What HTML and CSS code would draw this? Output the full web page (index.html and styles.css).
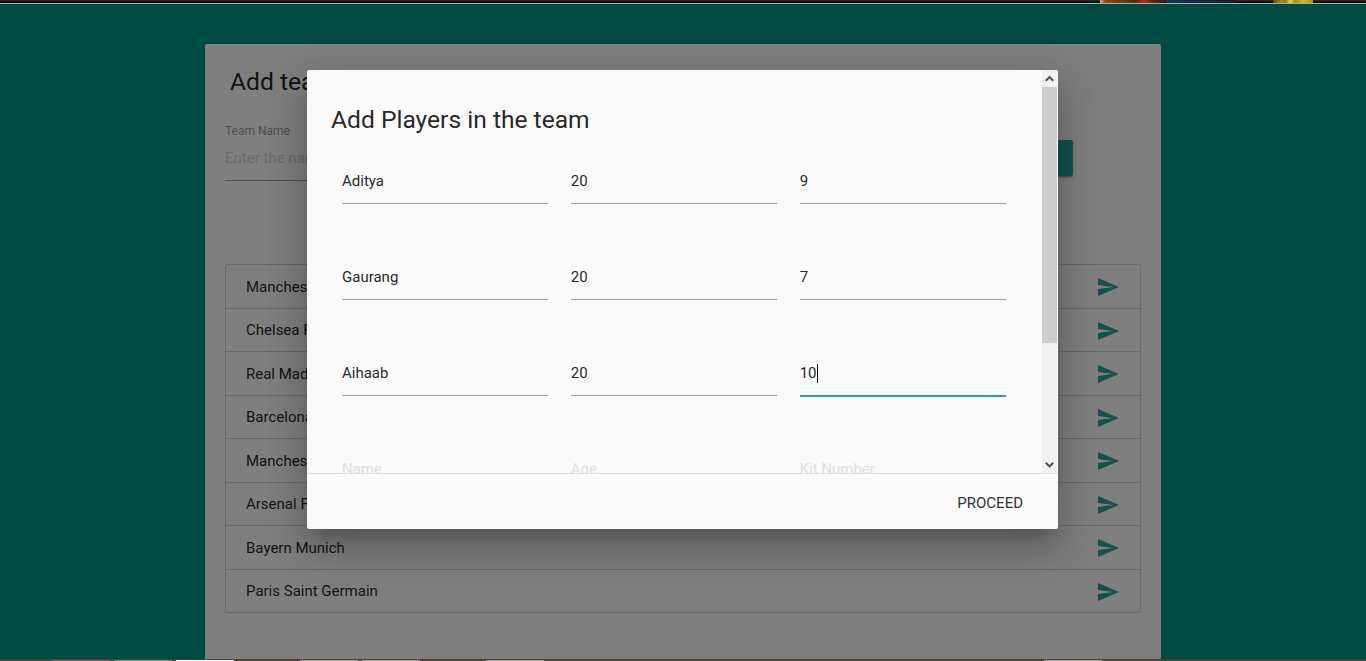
FILE: index.html
```html
<!DOCTYPE html>
<html lang="en">
<head>
<meta charset="utf-8">
<title>Add team</title>
<link rel="stylesheet" href="styles.css">
</head>
<body>
<svg class="defs"><symbol id="send" viewBox="0 0 24 24"><path d="M2.01 21L23 12 2.01 3 2 10l15 2-15 2z"/></symbol></svg>
<div class="page">
  <main class="card">
    <h5 class="card-title">Add team</h5>
    <div class="form-row">
      <div class="team-field">
        <div class="label">Team Name</div>
        <div class="team-input">Enter the name</div>
      </div>
      <div class="add-btn"></div>
    </div>
    <ul class="collection">
      <li>Manchester United<svg><use href="#send"/></svg></li>
      <li>Chelsea FC<svg><use href="#send"/></svg></li>
      <li>Real Madrid<svg><use href="#send"/></svg></li>
      <li>Barcelona<svg><use href="#send"/></svg></li>
      <li>Manchester City<svg><use href="#send"/></svg></li>
      <li>Arsenal FC<svg><use href="#send"/></svg></li>
      <li>Bayern Munich<svg><use href="#send"/></svg></li>
      <li>Paris Saint Germain<svg><use href="#send"/></svg></li>
    </ul>
  </main>
</div>
<div class="overlay">
  <section class="modal">
    <div class="modal-body">
      <div class="modal-content">
        <h5 class="modal-title">Add Players in the team</h5>
        <div class="players">
          <div class="field">Aditya</div><div class="field">20</div><div class="field">9</div>
          <div class="field">Gaurang</div><div class="field">20</div><div class="field">7</div>
          <div class="field">Aihaab</div><div class="field">20</div><div class="field focused">10<span class="caret"></span></div>
          <div class="field empty">Name</div><div class="field empty">Age</div><div class="field empty">Kit Number</div>
        </div>
      </div>
      <div class="scrollbar">
        <svg class="arrow" viewBox="0 0 15 17"><path d="M3.8 10.8 7.5 7.1l3.7 3.7"/></svg>
        <div class="thumb"></div>
        <svg class="arrow down" viewBox="0 0 15 17"><path d="M3.8 6.7l3.7 3.7 3.7-3.7"/></svg>
      </div>
    </div>
    <footer class="modal-footer"><span class="proceed">PROCEED</span></footer>
  </section>
</div>
<div class="strip-top"></div>
<div class="strip-bottom"></div>
</body>
</html>
```
FILE: styles.css
```css
* { box-sizing: border-box; }
body { margin: 0; height: 661px; overflow: hidden; background: #009688; font: 15px/22.5px Roboto, sans-serif; color: rgba(0,0,0,.87); }
.defs { display: none; }
h5 { margin: 0; font-size: 24.6px; line-height: 27px; font-weight: 400; }
.page { height: 661px; padding-top: 44px; overflow: hidden; }
.card { width: 956px; height: 640px; margin-left: 205px; padding: 24px 20px 0; background: #fff; border-radius: 2px; box-shadow: 0 2px 2px rgba(0,0,0,.14), 0 1px 5px rgba(0,0,0,.12), 0 3px 1px -2px rgba(0,0,0,.2); }
.card-title { padding-left: 5px; }
.form-row { display: flex; height: 85px; margin-top: 25px; gap: 20px; }
.team-field { width: 700px; }
.label { font-size: 12px; line-height: 22px; color: #9e9e9e; }
.team-input { height: 39px; line-height: 33px; border-bottom: 1px solid #9e9e9e; color: #d8d8d8; }
.add-btn { width: 128px; height: 36px; margin-top: 20px; border-radius: 2px; background: #26a69a; box-shadow: 0 2px 2px rgba(0,0,0,.14), 0 1px 5px rgba(0,0,0,.12), 0 3px 1px -2px rgba(0,0,0,.2); }
.collection { margin: 59px 0 0; padding: 0; list-style: none; border: 1px solid #d6d6d6; border-radius: 2px; }
.collection li { display: flex; justify-content: space-between; height: 43.5px; padding: 10.5px 20px 9px; border-bottom: 1px solid #d6d6d6; }
.collection li:last-child { height: 42.5px; border-bottom: 0; }
.collection svg { width: 24px; height: 24px; margin-top: -.5px; fill: #26a69a; }
.overlay { position: absolute; top: 0; left: 0; width: 100%; height: 661px; padding: 70px 0 0 307px; background: rgba(0,0,0,.5); overflow: hidden; }
.modal { width: 751px; height: 459px; background: #fafafa; border-radius: 2px; overflow: hidden; box-shadow: 0 24px 38px 3px rgba(0,0,0,.14), 0 9px 46px 8px rgba(0,0,0,.12), 0 11px 15px -7px rgba(0,0,0,.2); }
.modal-body { display: flex; height: 403px; }
.modal-content { width: 735px; padding: 36px 24px 0; overflow: hidden; }
.players { display: grid; grid-template-columns: repeat(3, 1fr); column-gap: 22.5px; row-gap: 50px; padding: 0 12px 0 11px; margin-top: 25px; }
.field { display: flex; align-items: center; height: 46px; padding-top: 2px; border-bottom: 1px solid #9e9e9e; }
.field.focused { border-color: #26a69a; box-shadow: 0 1px #26a69a; }
.field.empty { color: #e0e0e0; }
.caret { width: 1px; height: 19px; background: #000; }
.scrollbar { display: flex; flex-direction: column; width: 15px; background: #f0f0f0; }
.thumb { height: 256px; background: #cdcdcd; }
.arrow { width: 15px; height: 17px; fill: none; stroke: #505050; stroke-width: 2; }
.down { margin-top: auto; }
.modal-footer { display: flex; justify-content: flex-end; height: 56px; padding: 10px 35px 0 0; border-top: 1px solid #dedede; }
.proceed { line-height: 38px; color: #343434; }
.strip-top { position: absolute; top: 0; left: 0; width: 100%; height: 4px; background:
  linear-gradient(#b0b8b5, #a0a8a5) 0 3px / 100% 1px no-repeat,
  linear-gradient(90deg, #4d480b, #a98b13 20%, #8f7a12 32%, #e8dc2a 42%, #a98b13 55%, #d5bd1b 75%, #b08f14) 1273px 0 / 40px 3px no-repeat,
  linear-gradient(90deg, #18354f, #102b49 40%, #142126) 1166px 0 / 70px 3px no-repeat,
  linear-gradient(90deg, #e0b0a0, #97411f 8%, #6b3a18 35%, #532c14 55%, #b02c1c 68%, #6b1f14 80%, #3a1510) 1100px 0 / 65px 3px no-repeat,
  linear-gradient(#292929 0 1px, #101010 1px); }
.strip-bottom { position: absolute; top: 659px; left: 0; width: 100%; height: 2px; background:
  linear-gradient(#a35e4d, #a35e4d) 52px 1px / 58px 1px no-repeat,
  linear-gradient(#858a74, #858a74) 114px 1px / 58px 1px no-repeat,
  linear-gradient(#fff, #fff) 176px 1px / 58px 1px no-repeat,
  linear-gradient(#b3a39b, #b3a39b) 300px 1px / 58px 1px no-repeat,
  linear-gradient(#b3a39b, #b3a39b) 362px 1px / 58px 1px no-repeat,
  linear-gradient(#b3a39b, #b3a39b) 486px 1px / 58px 1px no-repeat,
  linear-gradient(#b3a39b, #b3a39b) 1044px 1px / 58px 1px no-repeat,
  linear-gradient(#403e2c, #554a35); }
```
